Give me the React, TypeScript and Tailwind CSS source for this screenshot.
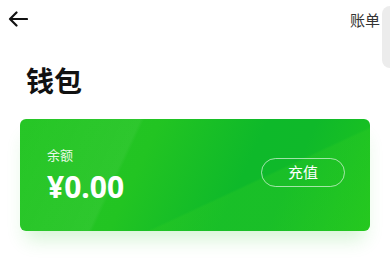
import React from "react";

const FONT = { fontFamily: '"Noto Sans", "Noto Sans CJK SC", sans-serif' };

export default function App() {
  return (
    <div className="relative h-[260px] w-[390px] overflow-hidden bg-white" style={FONT}>
      <div className="absolute right-0 top-[6px] h-[62px] w-[8px] rounded-l-[10px] bg-[#ececec]" />

      <header className="flex h-[40px] items-start justify-between pl-[8px] pr-[10px] pt-[9px]">
        <svg width="20" height="16" viewBox="0 0 20 16" fill="none" className="mt-[2px]">
          <path d="M19 8H2M8.5 1.5L2 8l6.5 6.5" stroke="#111" strokeWidth="2.2" strokeLinecap="round" strokeLinejoin="round" />
        </svg>
        <span className="text-[15px] leading-[22px] text-[#333]">账单</span>
      </header>

      <h1 className="pl-[26px] pt-[21px] text-[28px] font-bold leading-[40px] text-[#111]">钱包</h1>

      <div className="mx-[20px] mt-[18px] rounded-[6px] shadow-[0_14px_18px_-6px_rgba(40,200,40,0.2)]">
        <div className="relative flex h-[112px] items-center justify-between overflow-hidden rounded-[6px] bg-[linear-gradient(115deg,#26c626_0%,#22c422_35%,#0eb92a_62%,#0fb92a_74%,#20c61d_100%)] pl-[27px] pr-[25px]">
          <div className="absolute inset-0 bg-[linear-gradient(115deg,rgba(255,255,255,0)_0%,rgba(255,255,255,0.05)_30%,rgba(255,255,255,0)_31%)]" />
          <div className="absolute inset-0 bg-[linear-gradient(155deg,rgba(60,210,40,0)_0%,rgba(60,210,40,0)_62%,rgba(50,205,35,0.3)_63%,rgba(50,205,35,0.3)_100%)]" />
          <div className="relative flex flex-col">
            <span className="text-[13px] leading-[18px] text-white/90">余额</span>
            <span className="mt-[6px] text-[30px] font-bold leading-[34px] text-white">¥0.00</span>
          </div>
          <button className="relative -mt-[5px] flex h-[29px] w-[84px] items-center justify-center rounded-full border border-white/60 text-[15px] text-white">
            充值
          </button>
        </div>
      </div>
    </div>
  );
}
